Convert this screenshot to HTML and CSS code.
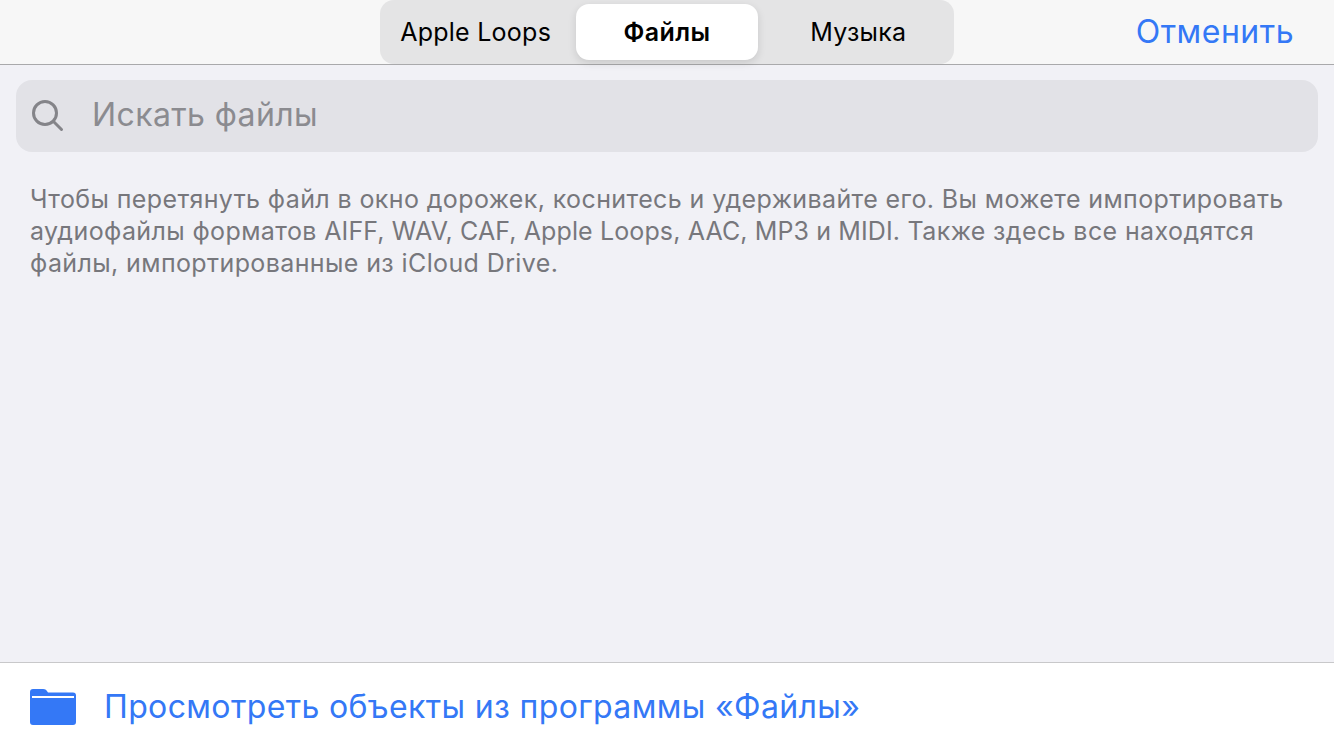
FILE: index.html
```html
<!DOCTYPE html>
<html lang="ru">
<head>
<meta charset="UTF-8">
<meta name="viewport" content="width=device-width, initial-scale=1.0">
<title>Файлы</title>
<link rel="stylesheet" href="styles.css">
</head>
<body>
<div class="page">
    <header class="topbar">
        <div class="tabs">
            <div class="tab">Apple Loops</div>
            <div class="tab active">Файлы</div>
            <div class="tab">Музыка</div>
        </div>
        <a class="cancel">Отменить</a>
    </header>
    <main class="content">
        <div class="search">
            <svg class="search-icon" width="34" height="34" viewBox="0 0 34 34" fill="none" stroke="#848489" stroke-width="3" stroke-linecap="round">
                <circle cx="14" cy="14" r="11.5"/>
                <path d="M22.500 22.500L30.500 30.500"/>
            </svg>
            <span class="search-text">Искать файлы</span>
        </div>
        <p class="hint">Чтобы перетянуть файл в окно дорожек, коснитесь и удерживайте его. Вы можете импортировать<br>аудиофайлы форматов <span class="latin">AIFF, WAV, CAF, Apple Loops, AAC, MP3 и MIDI.</span> Также здесь все находятся<br>файлы, импортированные из iCloud Drive.</p>
    </main>
    <footer class="browse">
        <svg class="folder" width="46" height="36" viewBox="0 0 46 36">
            <path d="M3 0H13C15.500 0 16.500 1 18 3.500H43C45 3.500 46 4.500 46 6.500V33C46 35 45 36 43 36H3C1 36 0 35 0 33V3C0 1 1 0 3 0Z" fill="#3478f6"/>
            <rect x="2" y="7" width="42" height="2" fill="#fff"/>
        </svg>
        <a class="browse-link">Просмотреть объекты из программы «Файлы»</a>
    </footer>
</div>
</body>
</html>
```

FILE: styles.css
```css
/* Basic styling */
body {
    font-family: Inter, "Liberation Sans", sans-serif;
    margin: 0;
    padding: 0;
    background-color: #f1f1f6;
}
.page {
    height: 750px;
    display: flex;
    flex-direction: column;
    overflow: hidden;
}
.topbar {
    height: 64px;
    flex: none;
    display: flex;
    align-items: center;
    justify-content: flex-end;
    position: relative;
    background-color: #f7f7f7;
    border-bottom: 1px solid #a9a9ab;
}
.tabs {
    position: absolute;
    left: 380px;
    top: 0;
    width: 574px;
    height: 64px;
    display: grid;
    grid-template-columns: repeat(3, 1fr);
    background-color: #e4e4e5;
    border-radius: 14px;
    font-size: 25px;
    letter-spacing: 0.25px;
    color: #000;
}
.tab {
    display: flex;
    align-items: center;
    justify-content: center;
    margin: 4px 5px;
    border-radius: 13px;
}
.tab.active {
    background-color: #fff;
    font-weight: 600;
    letter-spacing: 0.4px;
    box-shadow: 0 3px 8px rgba(0, 0, 0, 0.12);
}
.cancel {
    margin-right: 40px;
    margin-bottom: 2px;
    font-size: 32px;
    letter-spacing: 0.5px;
    color: #3478f6;
}
.content {
    flex: 1;
    padding: 15px 16px 0;
}
.search {
    height: 72px;
    display: flex;
    align-items: center;
    background-color: #e2e2e7;
    border-radius: 16px;
}
.search-icon {
    margin-left: 15px;
}
.search-text {
    margin-left: 27px;
    margin-bottom: 3px;
    font-size: 32px;
    letter-spacing: 0.4px;
    color: #8b8b90;
}
.hint {
    margin: 31px 0 0 14px;
    font-size: 25px;
    line-height: 32px;
    letter-spacing: 0.39px;
    color: #77777c;
    white-space: nowrap;
}
.hint .latin {
    letter-spacing: 0.12px;
}
.browse {
    height: 87px;
    flex: none;
    display: flex;
    align-items: center;
    background-color: #fff;
    border-top: 1px solid #c8c8ca;
}
.folder {
    margin-left: 30px;
}
.browse-link {
    margin-left: 28px;
    font-size: 32px;
    letter-spacing: 0.37px;
    color: #3478f6;
}
```
